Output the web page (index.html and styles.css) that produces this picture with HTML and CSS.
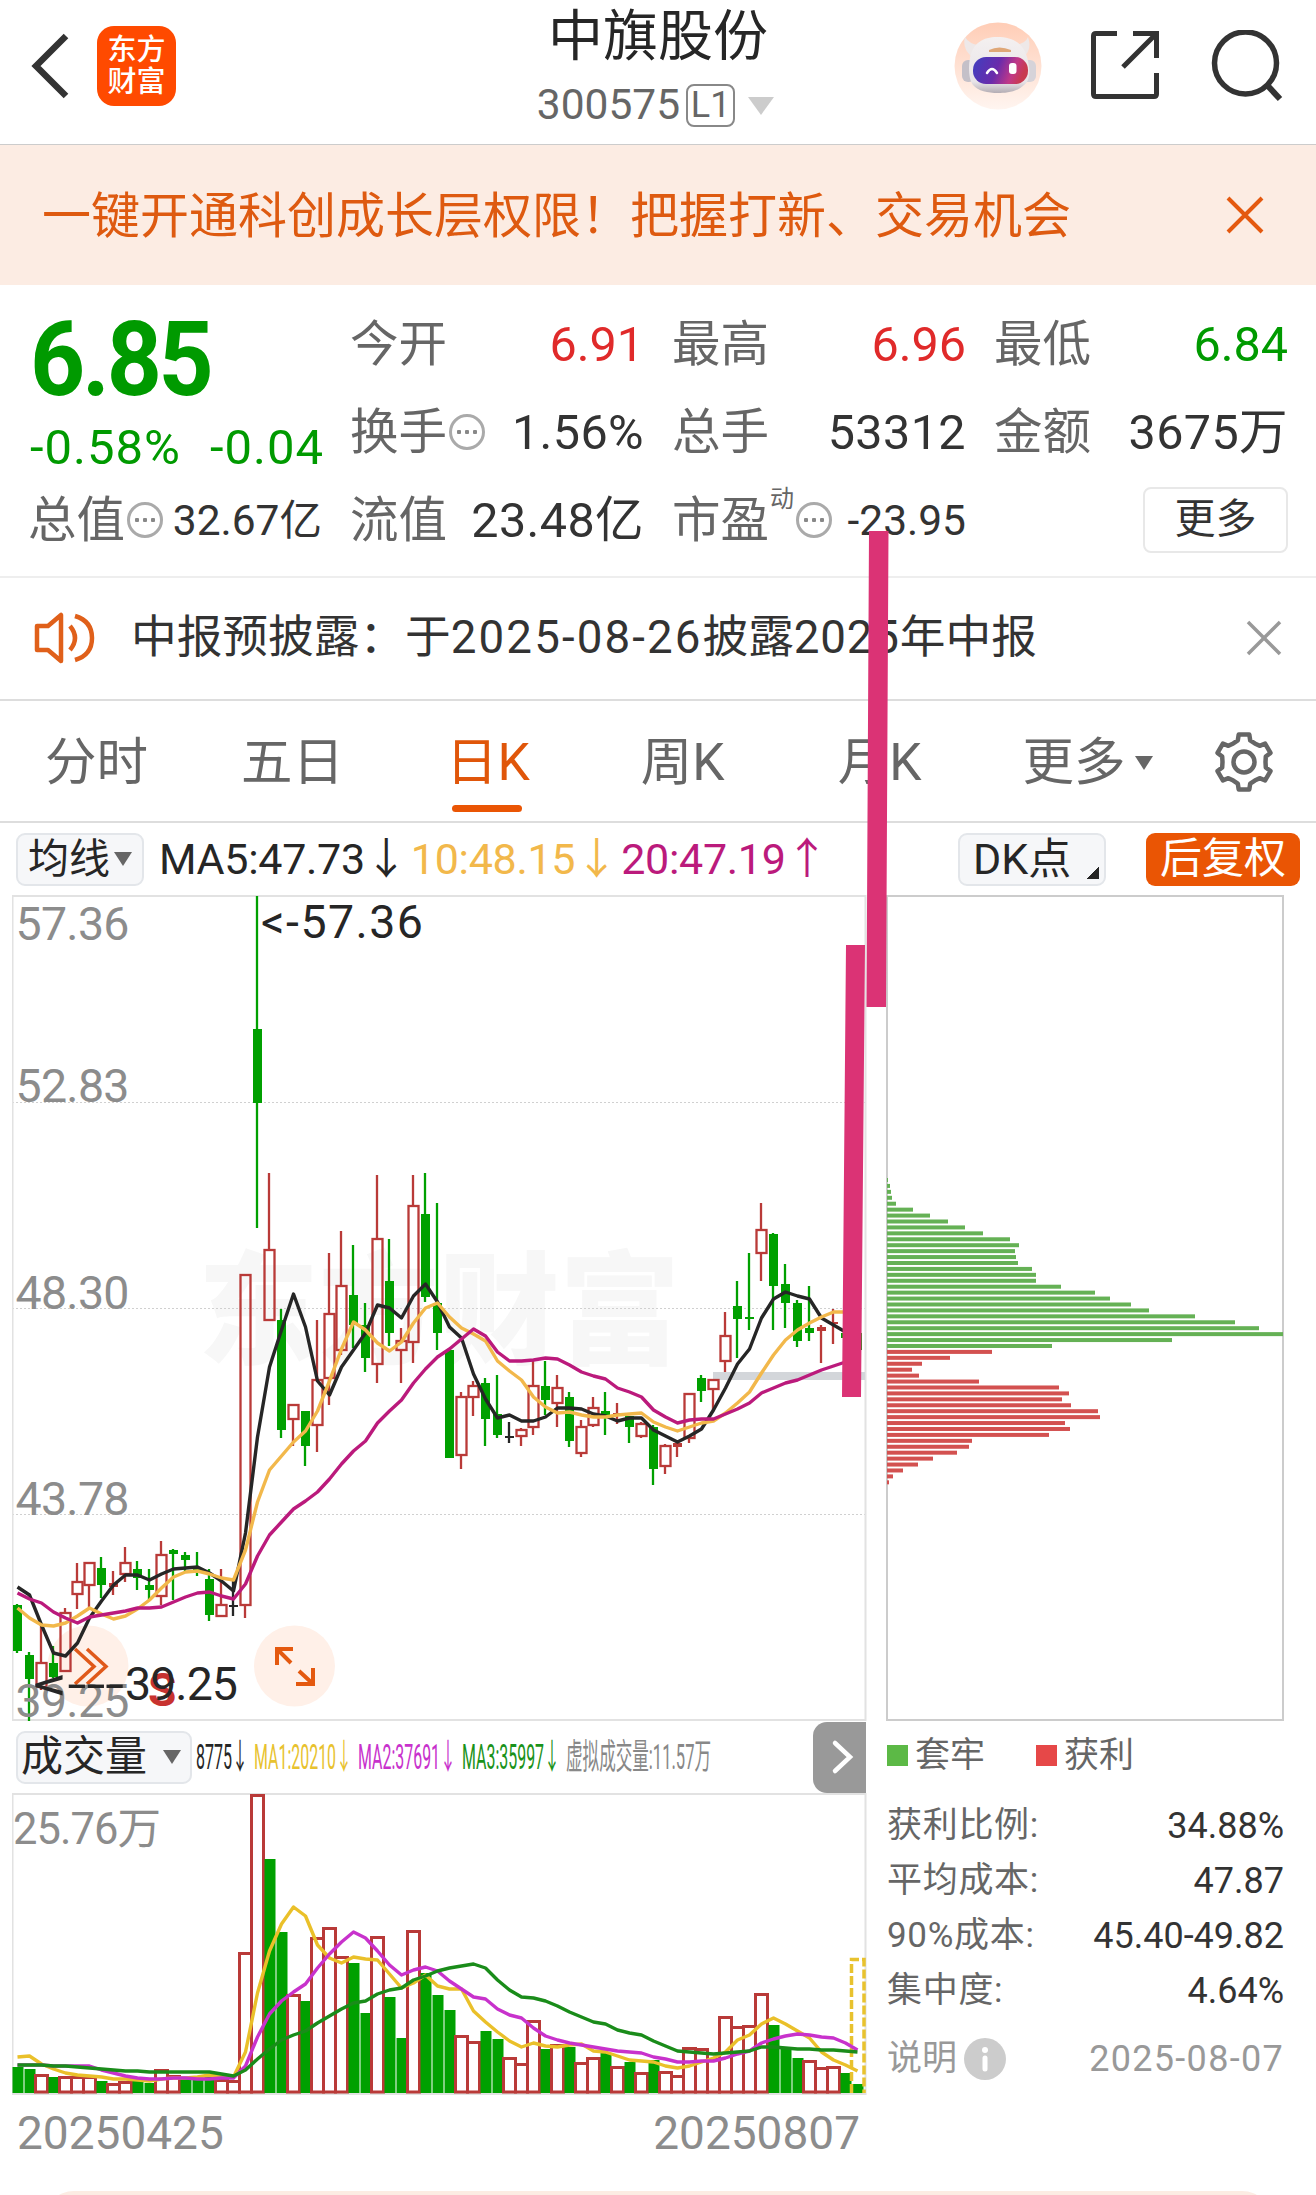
FILE: index.html
```html
<!DOCTYPE html>
<html lang="zh-CN">
<head>
    <meta charset="UTF-8">
    <meta name="viewport" content="width=device-width, initial-scale=1.0">
    <title>中旗股份 300575</title>
    <link rel="stylesheet" href="styles.css">
</head>
<body>
    <div class="page">
        <header class="header">
            <div class="header-left">
                <svg class="back" width="40" height="68" viewBox="0 0 40 68"><path d="M37 4 L7 34 L37 64" fill="none" stroke="#333" stroke-width="6.500"/></svg>
                <div class="logo"><span>东方</span><span>财富</span></div>
            </div>
            <div class="title">
                <h1>中旗股份</h1>
                <div class="code"><span>300575</span><span class="level">L1</span><i class="tri tri-light"></i></div>
            </div>
            <div class="header-right">
                <svg width="88" height="88" viewBox="0 0 88 88">
                    <defs>
                        <linearGradient id="halo" x1="0" y1="0" x2="0" y2="1"><stop offset="0" stop-color="#ffcdb6"/><stop offset="1" stop-color="#fff5f0"/></linearGradient>
                        <linearGradient id="visor" x1="0" y1="0" x2="1" y2="0.2"><stop offset="0" stop-color="#3f3fc0"/><stop offset="0.5" stop-color="#6a2bab"/><stop offset="0.8" stop-color="#c03888"/><stop offset="1" stop-color="#c83a50"/></linearGradient>
                        <linearGradient id="shell" x1="0" y1="0" x2="0" y2="1"><stop offset="0" stop-color="#f4f0f0"/><stop offset="0.8" stop-color="#e8e4e8"/><stop offset="1" stop-color="#b4adb4"/></linearGradient>
                    </defs>
                    <circle cx="44" cy="44" r="43.5" fill="url(#halo)"/>
                    <path d="M17 34 Q8 26 11 15 Q15 22 25 23Z M71 34 Q78 26 74 15 Q72 21 62 23Z" fill="#eee8e8"/>
                    <rect x="8" y="38" width="13" height="22" rx="6" fill="#c4c0c8"/>
                    <rect x="68" y="38" width="14" height="22" rx="6" fill="#d6d3d9"/>
                    <path d="M43 15 C59 15 69 21 73 35 C77 50 76 58 70 63 C63 70 52 71 44 71 C34 71 24 69 19 63 C15 58 14 46 16 36 C19 21 29 15 43 15Z" fill="url(#shell)"/>
                    <path d="M35 28 Q45 23 57 28 V30 H35Z" fill="#dfa777"/>
                    <rect x="19" y="35" width="55" height="27" rx="13" fill="url(#visor)"/>
                    <path d="M33 51 Q38 43 43 51" fill="none" stroke="#fff" stroke-width="2.500" stroke-linecap="round"/>
                    <rect x="55" y="41" width="7.500" height="11" rx="3" fill="#fff"/>
                </svg>
                <svg width="70" height="70" viewBox="0 0 70 70"><path d="M27 3.500H6 Q3.500 3.500 3.500 6 V64 Q3.500 66.500 6 66.500 H64 Q66.500 66.500 66.500 64 V43 M43 3.500 H66.500 V28 M66 4 L33 37" fill="none" stroke="#333" stroke-width="5"/></svg>
                <svg width="72" height="72" viewBox="0 0 72 72"><circle cx="34.500" cy="33" r="31" fill="none" stroke="#333" stroke-width="5.500"/><path d="M56 55 L69 69" stroke="#333" stroke-width="6"/></svg>
            </div>
        </header>

        <div class="banner">
            <span>一键开通科创成长层权限！把握打新、交易机会</span>
            <svg width="38" height="38" viewBox="0 0 38 38"><path d="M2 2 L36 36 M36 2 L2 36" stroke="#e4590f" stroke-width="4"/></svg>
        </div>

        <section class="quote">
            <div class="price">
                <div class="now">6.85</div>
                <div class="change"><span>-0.58%</span><span>-0.04</span></div>
            </div>
            <div class="cell"><label>今开</label><b class="up">6.91</b></div>
            <div class="cell"><label>最高</label><b class="up">6.96</b></div>
            <div class="cell"><label>最低</label><b class="down">6.84</b></div>
            <div class="cell"><label>换手</label><i class="more"></i><b>1.56%</b></div>
            <div class="cell"><label>总手</label><b>53312</b></div>
            <div class="cell"><label>金额</label><b>3675万</b></div>
            <div class="cell"><label>总值</label><i class="more"></i><b class="small">32.67亿</b></div>
            <div class="cell"><label>流值</label><b>23.48亿</b></div>
            <div class="cell"><label>市盈</label><sup>动</sup><i class="more"></i><b class="small">-23.95</b></div>
            <div class="cell cell-btn"><span class="btn-more">更多</span></div>
        </section>

        <div class="notice">
            <svg width="62" height="54" viewBox="0 0 62 54"><path d="M3 15 H14 L27 4 V50 L14 39 H3Z M36 15 Q46 27 36 39 M41 5 Q58 10 58 27 Q58 44 41 49" fill="none" stroke="#e0601a" stroke-width="4.500" stroke-linejoin="round"/></svg>
            <p>中报预披露：于<span class="date">2025-08-26</span>披露<span>2025</span>年中报</p>
            <svg width="36" height="36" viewBox="0 0 36 36"><path d="M2 2 L34 34 M34 2 L2 34" stroke="#999" stroke-width="3.500"/></svg>
        </div>

        <nav class="tabs">
            <span>分时</span>
            <span>五日</span>
            <span class="active">日K</span>
            <span>周K</span>
            <span>月K</span>
            <span>更多<i class="tri tri-tab"></i></span>
            <svg width="62" height="62" viewBox="-31 -31 62 62"><path id="gear" fill="none" stroke="#666" stroke-width="4.500" stroke-linejoin="round"/><circle r="10.500" fill="none" stroke="#666" stroke-width="4.500"/></svg>
        </nav>

        <div class="toolbar">
            <span class="btn ma-btn">均线<i class="tri"></i></span>
            <span class="ma ma5">MA5:47.73<em>↓</em></span>
            <span class="ma ma10">10:48.15<em>↓</em></span>
            <span class="ma ma20">20:47.19<em>↑</em></span>
            <span class="btn dk-btn">DK点<i class="corner"></i></span>
            <span class="btn adj-btn">后复权</span>
        </div>

        <main class="charts">
            <div class="kline">
                <svg class="price-chart" width="855" height="826" viewBox="12 895 855 826">
                    <text class="watermark" x="198" y="1354" textLength="482" lengthAdjust="spacingAndGlyphs">东方财富</text>
                    <path d="M12 1102.500H865M12 1308.500H865M12 1514.500H865" stroke="#d0d0d0" stroke-dasharray="2 2"/>
                    <path d="M12.500 896H865.500V1720H12.500Z" fill="none" stroke="#e2e2e2" stroke-width="2"/>
                    <rect x="713" y="1372" width="152" height="8" fill="#d3d6da"/>
                    <g fill="#fff0e8"><circle cx="88" cy="1666" r="40.500"/><circle cx="294.500" cy="1666" r="40.500"/></g>
                    <g id="candles"></g>
                    <g id="maLines"></g>
                    <path d="M75 1649L94 1666.500L75 1684M87 1649L106 1666.500L87 1684" fill="none" stroke="#e0591a" stroke-width="3.500"/>
                    <path d="M293 1649H277V1665M278 1650L291 1663M313 1668V1684H296M299 1671L312 1683" fill="none" stroke="#e4590f" stroke-width="4"/>
                    <g class="axis">
                        <text x="15.500" y="940" textLength="114">57.36</text>
                        <text x="15.500" y="1102" textLength="114">52.83</text>
                        <text x="15.500" y="1308.500" textLength="114">48.30</text>
                        <text x="15.500" y="1515" textLength="114">43.78</text>
                        <text x="15.500" y="1717" textLength="114">39.25</text>
                    </g>
                    <text class="mark-s" x="148" y="1706">S</text>
                    <text class="mark" x="261" y="938" textLength="162">&lt;-57.36</text>
                    <text class="mark" x="33" y="1700" textLength="91" lengthAdjust="spacingAndGlyphs">&lt;---</text>
                    <text class="mark" x="125" y="1700" textLength="113">39.25</text>
                </svg>

                <div class="vol-bar">
                    <span class="btn vol-btn">成交量<i class="tri"></i></span>
                    <svg class="vol-info" width="530" height="50" viewBox="196 1732 530 50">
                        <text x="196" y="1769" textLength="52" lengthAdjust="spacingAndGlyphs" fill="#262626">8775↓</text>
                        <text x="254" y="1769" textLength="98" lengthAdjust="spacingAndGlyphs" fill="#e8c22e">MA1:20210↓</text>
                        <text x="358" y="1769" textLength="98" lengthAdjust="spacingAndGlyphs" fill="#c832cc">MA2:37691↓</text>
                        <text x="462" y="1769" textLength="98" lengthAdjust="spacingAndGlyphs" fill="#1a921a">MA3:35997↓</text>
                        <text x="566" y="1769" textLength="145" lengthAdjust="spacingAndGlyphs" fill="#888">虚拟成交量:11.57万</text>
                    </svg>
                    <span class="next"><svg width="24" height="36" viewBox="0 0 24 36"><path d="M4 4L19 18L4 32" fill="none" stroke="#fff" stroke-width="4.500" stroke-linecap="round"/></svg></span>
                </div>

                <svg class="vol-chart" width="855" height="303" viewBox="12 1793 855 303">
                    <path d="M12.500 1794H865.500V2094H12.500Z" fill="none" stroke="#e2e2e2" stroke-width="2"/>
                    <g id="volumes"></g>
                    <path d="M851.500 2093V1959.500H864V2093" fill="none" stroke="#e8c22e" stroke-width="3.500" stroke-dasharray="9 3"/>
                    <g id="volLines"></g>
                    <text class="vol-max" x="13" y="1844" textLength="148">25.76万</text>
                </svg>
                <div class="dates"><span>20250425</span><span>20250807</span></div>
            </div>

            <aside class="cost">
                <svg width="398" height="826" viewBox="886 895 398 826">
                    <path d="M887 896H1283V1720H887Z" fill="none" stroke="#ccc" stroke-width="2"/>
                    <g id="chips"></g>
                </svg>
                <div class="legend"><i class="green"></i>套牢<i class="red"></i>获利</div>
                <dl>
                    <div><dt>获利比例:</dt><dd>34.88%</dd></div>
                    <div><dt>平均成本:</dt><dd>47.87</dd></div>
                    <div><dt>90%成本:</dt><dd>45.40-49.82</dd></div>
                    <div><dt>集中度:</dt><dd>4.64%</dd></div>
                    <div class="note"><dt>说明<svg width="42" height="42" viewBox="0 0 42 42"><circle cx="21" cy="21" r="21" fill="#ccc"/><circle cx="21" cy="12" r="3" fill="#fff"/><path d="M21 20V31" stroke="#fff" stroke-width="5" stroke-linecap="round"/></svg></dt><dd>2025-08-07</dd></div>
                </dl>
            </aside>
        </main>

        <div class="bottom-card"></div>

        <!-- hand drawn strokes lying over the page -->
        <svg class="strokes" width="60" height="880" viewBox="835 525 60 880">
            <path d="M869 531H888.500L886 1007H866.500Z M846 945H865L861 1397H842Z" fill="#db3375"/>
        </svg>
    </div>

    <script>
        const X0 = 17.5, STEP = 12;
        const x = i => X0 + i * STEP;

        // [colour, body top, body bottom, wick top, wick bottom]
        const candles = [
            ['g',1605,1651,1604,1653],['g',1655,1679,1652,1721],['r',1663,1687,1625,1690],['g',1663,1677,1646,1678],['r',1613,1671,1608,1671],
            ['r',1582,1594,1563,1609],['r',1563,1585,1563,1607],['g',1568,1585,1557,1598],['r',1583,1587,1571,1595],['r',1563,1574,1547,1582],
            ['g',1569,1578,1561,1590],['g',1585,1590,1569,1600],['r',1555,1596,1541,1605],['g',1550,1554,1549,1600],['g',1555,1560,1552,1572],
            ['g',1569,1573,1552,1576],['g',1579,1615,1569,1621],['r',1605,1616,1569,1616],['k',1605,1606,1578,1616],['r',1275,1605,1275,1618],
            ['g',1029,1103,896,1228],['r',1250,1320,1173,1320],['g',1320,1430,1309,1438],['r',1405,1419,1405,1446],['g',1411,1446,1411,1466],
            ['r',1380,1425,1320,1452],['r',1314,1378,1253,1405],['r',1286,1350,1231,1355],['g',1295,1325,1245,1348],['g',1325,1358,1303,1372],
            ['r',1239,1364,1175,1383],['g',1281,1333,1239,1346],['r',1341,1350,1328,1383],['r',1206,1342,1175,1363],['g',1214,1297,1173,1302],
            ['g',1303,1333,1203,1350],['g',1350,1458,1350,1458],['r',1397,1455,1392,1469],['r',1386,1397,1381,1416],['g',1383,1419,1378,1446],
            ['g',1414,1435,1375,1438],['k',1436,1437,1422,1443],['r',1430,1436,1428,1446],['r',1386,1427,1359,1435],['g',1386,1400,1361,1415],
            ['r',1388,1403,1375,1427],['g',1397,1441,1392,1447],['r',1427,1453,1420,1457],['r',1408,1425,1397,1427],['g',1411,1415,1392,1435],
            ['r',1413,1416,1403,1424],['g',1416,1427,1416,1443],['r',1424,1436,1422,1438],['g',1427,1469,1425,1485],['r',1446,1466,1444,1474],
            ['r',1443,1447,1440,1457],['r',1394,1438,1394,1443],['g',1378,1391,1375,1402],['r',1380,1389,1380,1410],['r',1336,1361,1312,1372],
            ['g',1306,1319,1281,1358],['g',1317,1319,1253,1330],['r',1230,1253,1203,1281],['g',1234,1286,1233,1330],['g',1284,1303,1264,1328],
            ['g',1303,1341,1300,1347],['g',1328,1333,1286,1341],['r',1327,1331,1325,1363],['r',1322,1323,1309,1344],['g',1333,1338,1333,1338],
            ['g',1333,1350,1333,1350]
        ];
        const ma5 = [1587,1595,1625,1653,1656,1643,1618,1601,1585,1575,1575,1580,1574,1569,1568,1567,1573,1581,1591,1533,1437,1367,1330,1294,1327,1381,1395,1367,1350,1333,1305,1308,1318,1296,1284,1302,1327,1338,1374,1399,1418,1415,1421,1421,1417,1408,1408,1409,1414,1416,1421,1418,1418,1430,1436,1442,1436,1429,1410,1388,1364,1349,1318,1299,1292,1296,1299,1318,1325,1332,1338];
        const ma10 = [1608,1618,1625,1626,1623,1616,1608,1614,1619,1616,1609,1600,1588,1577,1572,1571,1574,1578,1580,1550,1502,1470,1456,1442,1431,1411,1381,1349,1322,1330,1343,1351,1342,1323,1308,1303,1317,1328,1334,1341,1361,1371,1380,1397,1407,1413,1412,1415,1417,1417,1415,1414,1413,1422,1427,1431,1427,1423,1421,1413,1403,1392,1373,1355,1340,1330,1323,1317,1312,1312,1312];
        const ma20 = [1593,1599,1603,1612,1618,1623,1617,1615,1613,1611,1608,1608,1607,1602,1597,1593,1592,1596,1599,1584,1556,1535,1522,1509,1501,1492,1479,1464,1451,1441,1423,1411,1400,1383,1369,1357,1349,1339,1329,1336,1352,1361,1361,1360,1358,1359,1365,1372,1376,1379,1388,1392,1397,1410,1417,1423,1420,1419,1419,1414,1409,1403,1393,1388,1383,1380,1375,1370,1366,1362,1358];

        // volume bar tops
        const vols = [2067,2069,2074,2077,2076,2076,2076,2081,2083,2081,2081,2083,2069,2075,2079,2079,2075,2079,2080,1952,1794,1859,1932,1994,2001,1937,1927,1956,1963,2013,1936,1997,2038,1930,1973,1995,2010,2035,2041,2031,2039,2057,2063,2020,2049,2044,2047,2062,2057,2053,2066,2062,2072,2060,2071,2075,2047,2048,2058,2016,2026,2025,1993,2025,2047,2058,2060,2067,2066,2073,2084];
        const volColors = 'ggrgrrrgrr' + 'ggrrgggrrr' + 'rggrgrrrgg' + 'rggrgggrrg' + 'grrrgrgrrg' + 'rgrgrrrrrr' + 'rrrgggrrrg' + 'g';
        const vma1 = [2057,2056,2064,2069,2073,2075,2076,2077,2079,2079,2080,2081,2079,2078,2078,2077,2075,2076,2077,2052,1993,1951,1924,1907,1916,1945,1958,1963,1957,1959,1960,1974,1988,1983,1975,1986,1989,1989,2011,2022,2032,2041,2047,2043,2046,2047,2045,2044,2051,2052,2056,2060,2061,2062,2066,2068,2066,2062,2058,2052,2040,2035,2024,2018,2024,2031,2038,2052,2060,2065,2071];
        const vma2 = [2065,2065,2065,2066,2066,2066,2066,2070,2073,2076,2078,2079,2079,2078,2078,2079,2079,2078,2078,2066,2037,2014,2001,1992,1984,1968,1954,1942,1932,1938,1951,1965,1975,1970,1967,1971,1981,1989,1997,1999,2009,2015,2018,2028,2036,2040,2043,2045,2047,2049,2051,2052,2053,2057,2059,2062,2062,2061,2061,2058,2054,2051,2043,2039,2036,2034,2035,2037,2038,2043,2050];
        const vma3 = [2065,2065,2065,2066,2066,2067,2068,2069,2070,2071,2071,2072,2072,2072,2072,2072,2072,2074,2076,2070,2059,2049,2040,2035,2031,2023,2016,2009,2003,2001,1994,1990,1988,1980,1976,1971,1968,1966,1964,1968,1980,1990,1997,1998,2001,2006,2012,2017,2022,2024,2030,2033,2035,2041,2046,2051,2052,2053,2054,2053,2052,2051,2047,2047,2048,2049,2049,2050,2050,2051,2052];

        // cost distribution widths, trapped first and then profitable
        const trapped = [1,3,4,5,9,26,43,61,78,96,123,132,128,129,131,145,149,149,174,208,223,244,262,308,348,372,396,285,165];
        const profit = [105,63,35,25,32,92,172,182,175,184,211,213,178,183,162,85,82,70,46,31,16,6,2];

        const GREEN = '#00a000', RED = '#b93a38';

        function drawCandles() {
            let out = '';
            candles.forEach(([c, top, bottom, high, low], i) => {
                const cx = x(i);
                const color = c === 'g' ? GREEN : c === 'r' ? RED : '#262626';
                if (c === 'r' && bottom - top > 4) {
                    out += `<path d="M${cx - 0.5} ${high}V${top}M${cx - 0.5} ${bottom}V${low}" stroke="${color}" stroke-width="2.3"/>`;
                    out += `<rect x="${cx - 5}" y="${top}" width="10" height="${bottom - top}" fill="none" stroke="${color}" stroke-width="2.3"/>`;
                } else {
                    out += `<path d="M${cx - 0.5} ${high}V${low}" stroke="${color}" stroke-width="2.3"/>`;
                    out += `<rect x="${cx - 4.5}" y="${top}" width="9" height="${Math.max(bottom - top, 2)}" fill="${color}"/>`;
                }
            });
            document.getElementById('candles').innerHTML = out;
        }

        function drawVolumes() {
            let out = '';
            vols.forEach((top, i) => {
                if (volColors[i] === 'g') {
                    out += `<rect x="${x(i) - 5}" y="${top}" width="11" height="${2093 - top}" fill="${GREEN}"/>`;
                } else {
                    out += `<rect x="${x(i) - 6}" y="${top + 1.5}" width="12" height="${2092 - top - 1.5}" fill="#fff" stroke="${RED}" stroke-width="3"/>`;
                }
            });
            document.getElementById('volumes').innerHTML = out;
        }

        function line(data, color) {
            const points = data.map((y, i) => x(i) + ',' + y).join(' ');
            return `<polyline points="${points}" fill="none" stroke="${color}" stroke-width="3.4" stroke-linejoin="round"/>`;
        }

        function drawChips() {
            let out = '';
            trapped.concat(profit).forEach((w, i) => {
                const color = i < trapped.length ? '#65b155' : '#d35150';
                out += `<rect x="887" y="${1178 + i * 5.928}" width="${w}" height="4" fill="${color}"/>`;
            });
            document.getElementById('chips').innerHTML = out;
        }

        function drawGear() {
            // six teeth
            let d = '';
            for (let i = 0; i < 6; i++) {
                [[-30, 21.5], [-16, 22.5], [-11, 28], [11, 28], [16, 22.5]].forEach(([a, r]) => {
                    const t = (i * 60 + a - 90) * Math.PI / 180;
                    d += (d ? 'L' : 'M') + (Math.cos(t) * r).toFixed(1) + ' ' + (Math.sin(t) * r).toFixed(1);
                });
            }
            document.getElementById('gear').setAttribute('d', d + 'Z');
        }

        drawCandles();
        drawVolumes();
        drawChips();
        drawGear();
        document.getElementById('maLines').innerHTML = line(ma5, '#262626') + line(ma10, '#f2b84b') + line(ma20, '#bb1a7c');
        document.getElementById('volLines').innerHTML = line(vma1, '#eac02a') + line(vma2, '#c832cc') + line(vma3, '#1a8c1a');
    </script>
</body>
</html>
```

FILE: styles.css
```css
* {
    box-sizing: border-box;
}
body {
    margin: 0;
    background: #fff;
    color: #333;
    font-family: Roboto, "Noto Sans CJK SC", sans-serif;
    line-height: 1;
}
h1, p, dl, dd {
    margin: 0;
}
i, em {
    font-style: normal;
}
.page {
    position: relative;
    width: 1316px;
    height: 2195px;
    overflow: hidden;
}

/* header */
.header {
    display: grid;
    grid-template-columns: 1fr 300px 1fr;
    height: 145px;
    border-bottom: 1px solid #ccc;
}
.header-left {
    display: flex;
    align-items: flex-start;
    padding: 26px 0 0 29px;
    gap: 28px;
}
.back {
    margin-top: 6px;
}
.logo {
    display: flex;
    flex-direction: column;
    justify-content: center;
    align-items: center;
    gap: 3px;
    width: 79px;
    height: 80px;
    border-radius: 17px;
    background: #ff4a00;
    color: #fff;
    font-size: 29px;
    font-weight: 500;
}
.title {
    display: flex;
    flex-direction: column;
    align-items: center;
    padding-top: 9px;
}
.title h1 {
    font-size: 55px;
    font-weight: 400;
    color: #262626;
}
.code {
    display: flex;
    align-items: center;
    margin-top: 20px;
    padding-right: 5px;
    font-size: 42.500px;
    color: #666;
}
.level {
    width: 49px;
    height: 43px;
    margin: 0 13px 0 6px;
    border: 2px solid #888;
    border-radius: 8px;
    font-size: 36px;
    line-height: 39px;
    text-align: center;
}
.header-right {
    display: flex;
    justify-content: flex-end;
    align-items: flex-start;
    padding: 30px 33px 0 0;
}
.header-right svg:first-child {
    margin: -8px 48px 0 0;
}
.header-right svg:nth-child(2) {
    margin-right: 51px;
}
.tri {
    flex: none;
    border: solid transparent;
    border-width: 14px 9px 0;
    border-top-color: #666;
}
.tri-light {
    border-width: 18px 13px 0;
    border-top-color: #ccc;
}

/* promo banner */
.banner {
    display: flex;
    justify-content: space-between;
    align-items: center;
    height: 140px;
    padding: 0 52px 0 42px;
    background: #fcece3;
    color: #de5a10;
    font-size: 49px;
}
.banner span {
    padding-top: 3px;
}

/* quote numbers */
.quote {
    display: grid;
    grid-template-columns: repeat(4, 1fr);
    grid-template-rows: repeat(3, 88px);
    column-gap: 30px;
    height: 293px;
    padding: 16px 28px 0 30px;
    border-bottom: 2px solid #eee;
}
.price {
    grid-row: 1 / 3;
    color: #009a00;
}
.now {
    margin-top: 7px;
    font-size: 103px;
    font-weight: 700;
    letter-spacing: -3.500px;
    transform: scaleX(0.935);
    transform-origin: left;
}
.change {
    display: flex;
    justify-content: space-between;
    margin: 12px -2px 0 0;
    font-size: 49px;
    letter-spacing: 1px;
    white-space: nowrap;
}
.cell {
    display: flex;
    align-items: center;
    margin-left: -2px;
    white-space: nowrap;
}
.cell label {
    color: #666;
    font-size: 48.500px;
}
.cell b {
    margin-left: auto;
    font-size: 48.500px;
    font-weight: 400;
    letter-spacing: 0.400px;
}
.cell .small {
    font-size: 42.500px;
    letter-spacing: 0;
}
.cell .up, .cell .down {
    letter-spacing: 0;
}
.cell .up {
    color: #e02a2a;
}
.cell .down {
    color: #009a00;
}
.cell sup {
    align-self: flex-start;
    margin: 10px 0 0 1px;
    font-size: 24px;
    color: #666;
}
.more {
    width: 36px;
    height: 36px;
    margin: -2px 0 0 2px;
    border: 3px solid #aaa;
    border-radius: 50%;
    background: radial-gradient(circle, #888 2px, transparent 2.500px) center / 8px 30px repeat-x content-box;
    padding: 0 3px;
}
.cell-btn {
    justify-content: flex-end;
}
.btn-more {
    width: 145px;
    height: 66px;
    margin-top: -2px;
    border: 2px solid #e8e8e8;
    border-radius: 8px;
    font-size: 41px;
    line-height: 60px;
    text-align: center;
}

/* notice */
.notice {
    display: flex;
    align-items: center;
    height: 123px;
    padding: 0 34px 1px 34px;
    border-bottom: 2px solid #ddd;
}
.notice p {
    flex: 1;
    margin-left: 35px;
    font-size: 45.700px;
}
.notice p span {
    letter-spacing: 0.800px;
}
.notice p .date {
    letter-spacing: 2.100px;
}

/* tabs */
.tabs {
    display: flex;
    align-items: center;
    height: 122px;
    padding: 2px 41px 0 45px;
    border-bottom: 2px solid #ddd;
    color: #666;
    font-size: 51.500px;
}
.tabs span {
    position: relative;
    display: flex;
    align-items: center;
    margin-right: 93px;
    padding-top: 2px;
}
.tabs span:nth-child(2) {
    margin-right: 102px;
}
.tabs span:nth-child(3) {
    margin-right: 111px;
}
.tabs span:nth-child(4) {
    margin-right: 113px;
}
.tabs span:nth-child(5) {
    margin-right: 101px;
}
.tabs span:nth-child(6) {
    margin-right: auto;
}
.tabs .active {
    color: #e0560a;
}
.tabs .active::after {
    content: "";
    position: absolute;
    left: 6px;
    bottom: -23px;
    width: 70px;
    height: 7px;
    border-radius: 4px;
    background: #ea5504;
}
.tri-tab {
    margin-left: 9px;
}

/* toolbar */
.toolbar {
    display: flex;
    align-items: center;
    height: 72px;
    padding: 0 16px;
    font-size: 43px;
    white-space: nowrap;
}
.btn {
    display: flex;
    align-items: center;
    height: 53px;
    border: 2px solid #e3e6ea;
    border-radius: 9px;
    background: #f6f7f9;
    color: #262626;
    font-size: 41px;
}
.ma-btn {
    width: 128px;
    padding-left: 10px;
    gap: 4px;
}
.ma {
    letter-spacing: -0.300px;
}
.ma em {
    display: inline-block;
    width: 43px;
}
.ma5 {
    margin-left: 15px;
    color: #262626;
}
.ma10 {
    margin-left: 3px;
    color: #f2b84b;
}
.ma20 {
    margin-left: 3px;
    color: #bb1a7c;
}
.dk-btn {
    position: relative;
    width: 148px;
    margin-left: auto;
    padding-left: 13px;
    font-size: 43px;
}
.corner {
    position: absolute;
    right: 5px;
    bottom: 5px;
    width: 13px;
    height: 12px;
    background: linear-gradient(135deg, transparent 50%, #262626 50%);
}
.adj-btn {
    justify-content: center;
    width: 154px;
    margin-left: 40px;
    border: 0;
    background: #ea5504;
    color: #fff;
    font-size: 42px;
}

/* charts */
.charts {
    display: flex;
    padding-left: 12px;
}
.charts svg {
    display: block;
}
.kline {
    width: 855px;
}
.watermark {
    font-size: 122px;
    font-weight: 900;
    fill: #f7f7f7;
}
.axis {
    font-size: 46.500px;
    fill: #8c8c8c;
}
.mark {
    font-size: 46.500px;
    fill: #262626;
}
.mark-s {
    font-size: 46px;
    font-weight: 700;
    fill: #c8322f;
}
.vol-max {
    font-size: 43.500px;
    fill: #8c8c8c;
}
.vol-bar {
    display: flex;
    align-items: center;
    height: 72px;
    padding-left: 4px;
}
.vol-btn {
    width: 176px;
    padding-left: 3px;
    gap: 16px;
    font-size: 42px;
}
.vol-info {
    margin-left: 4px;
    font-size: 35px;
    overflow: visible;
}
.next {
    display: flex;
    align-items: center;
    width: 53px;
    height: 71px;
    margin-left: auto;
    margin-right: 1px;
    padding-left: 18px;
    border-radius: 14px 0 0 14px;
    background: #999;
}
.dates {
    display: flex;
    justify-content: space-between;
    padding: 14px 7px 0 5px;
    font-size: 46px;
    color: #8c8c8c;
}

/* cost distribution */
.cost {
    width: 398px;
    margin-left: 19px;
}
.legend {
    display: flex;
    align-items: center;
    height: 68px;
    padding-left: 1px;
    font-size: 35px;
    color: #666;
}
.legend i {
    width: 21px;
    height: 21px;
    margin-right: 7px;
}
.green {
    background: #5cb946;
}
.legend .red {
    margin-left: 51px;
    background: #e64848;
}
.cost dl {
    margin-top: 9px;
}
.cost dl div {
    display: flex;
    justify-content: space-between;
    align-items: center;
    height: 55px;
    font-size: 36px;
}
.cost dt {
    display: flex;
    align-items: center;
    gap: 7px;
    padding-left: 1px;
    color: #666;
    font-size: 35px;
    letter-spacing: 0.700px;
}
.cost dl .note {
    height: 81px;
    letter-spacing: 1.300px;
}
.cost .note dt {
    letter-spacing: 0;
}
.cost .note dt, .cost .note dd {
    color: #999;
}

.bottom-card {
    height: 60px;
    margin: 35px 44px 0;
    border-radius: 34px;
    background: #fcece3;
}
.strokes {
    position: absolute;
    left: 835px;
    top: 525px;
}
```
